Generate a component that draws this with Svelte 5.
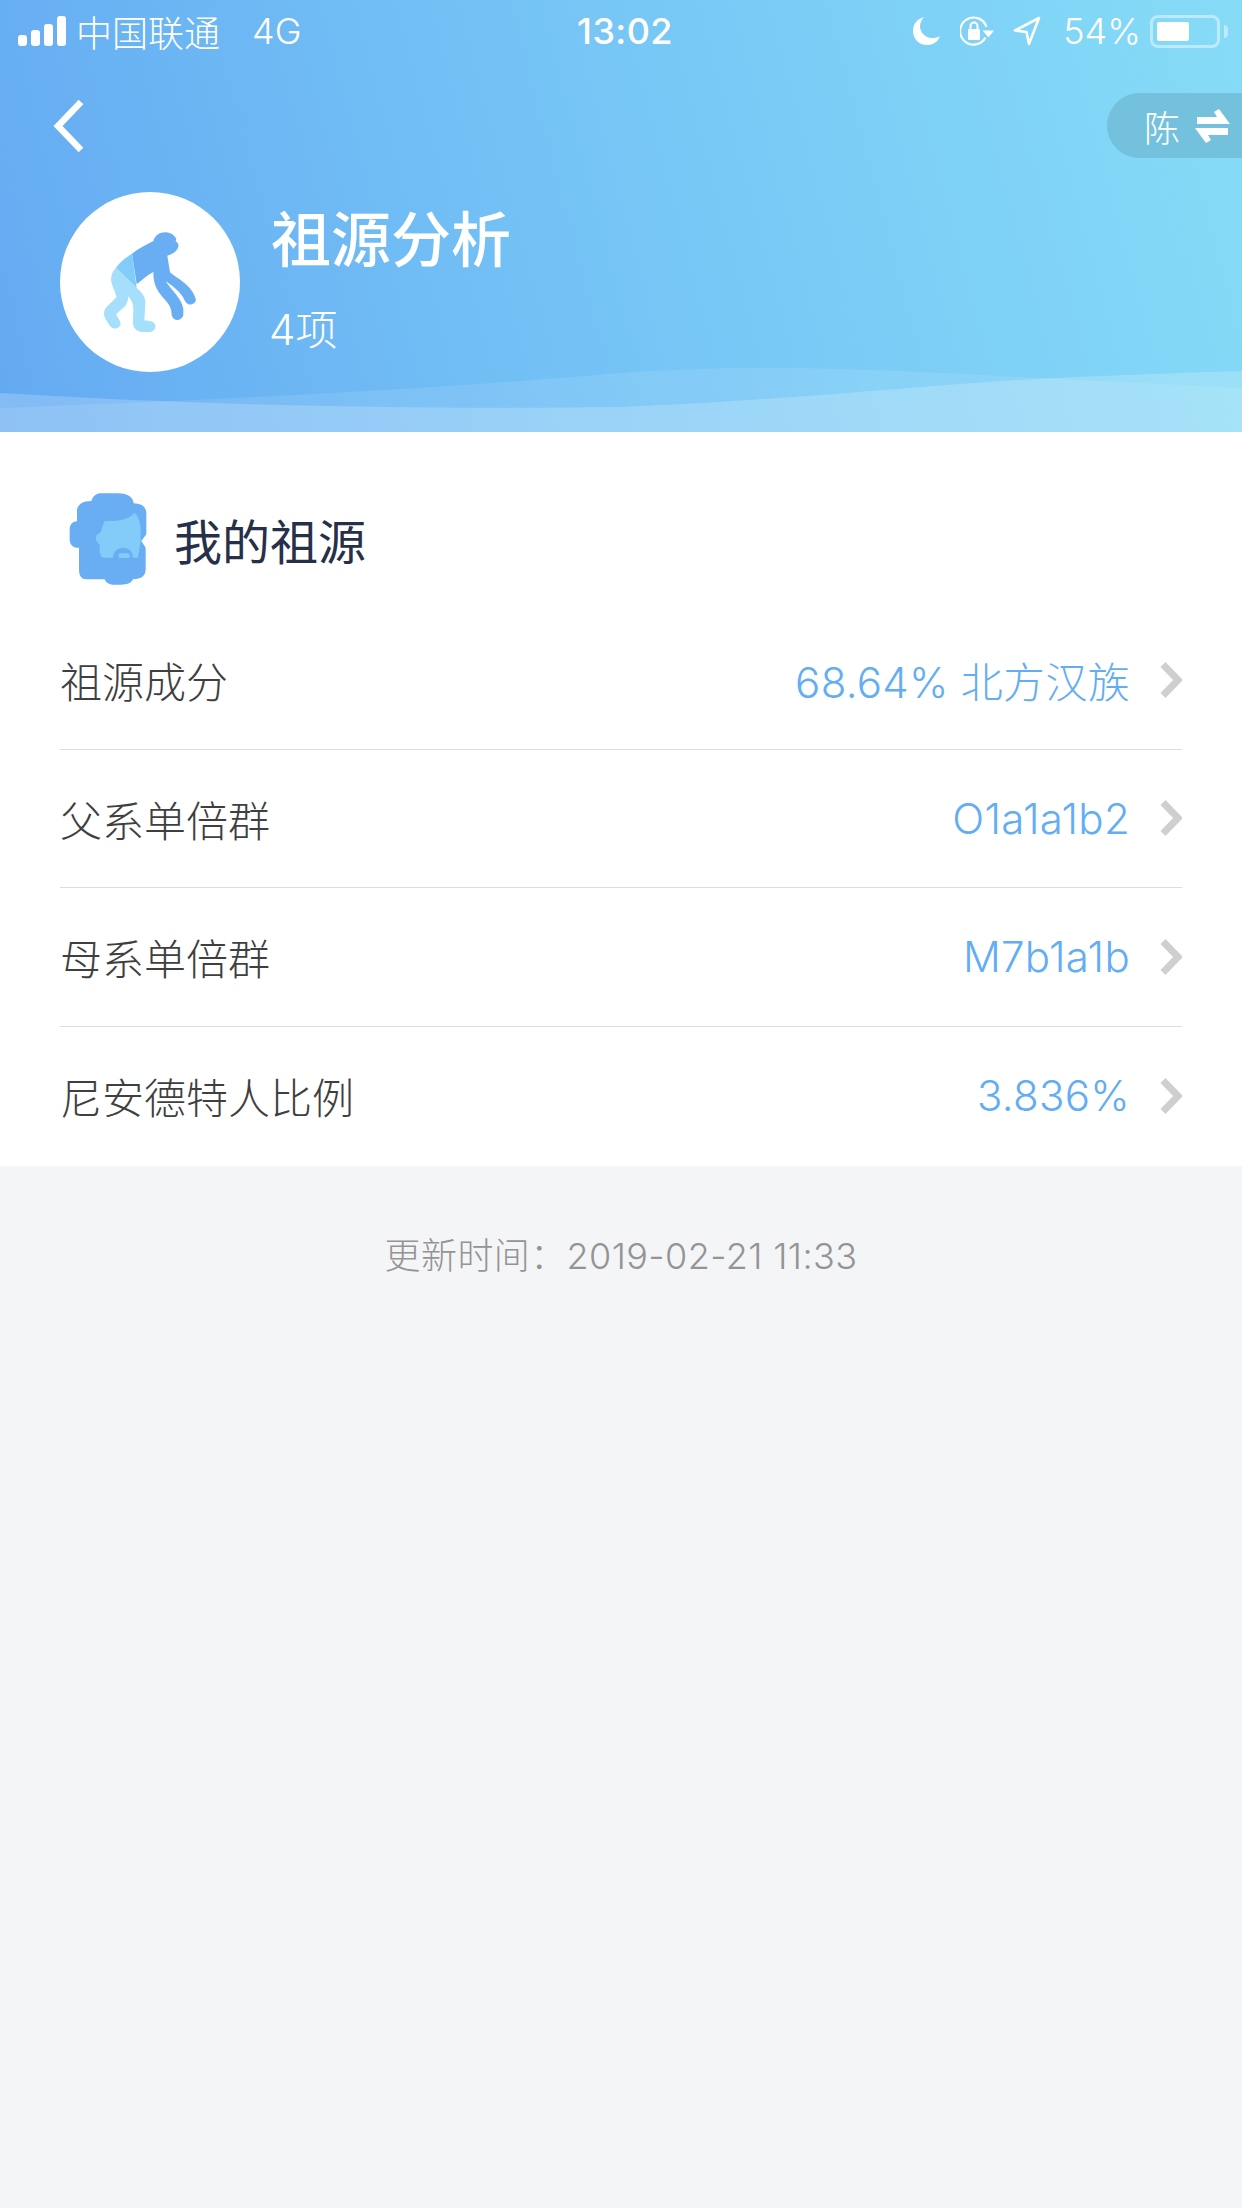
<script lang="ts">
	const rows = [
		{ label: '祖源成分', value: '68.64% 北方汉族' },
		{ label: '父系单倍群', value: 'O1a1a1b2' },
		{ label: '母系单倍群', value: 'M7b1a1b' },
		{ label: '尼安德特人比例', value: '3.836%' }
	]
	const bars = [11, 16, 22, 30]
</script>

<div class="page">
	<header class="hero">
		<div class="status">
			<div class="status-left">
				<div class="signal">
					{#each bars as h}
						<span style="height: {h}px"></span>
					{/each}
				</div>
				<span class="carrier">中国联通</span>
				<span class="net">4G</span>
			</div>
			<div class="time">13:02</div>
			<div class="status-right">
				<svg class="moon" viewBox="0 0 27 28"><path d="M11 0C4 2 0 7 0 14c0 8 6 14 14 14 6 0 11-3 13-9-2 1.500-5 2-8 2C12 21 7 15 7 9c0-3 2-7 4-9z" fill="#fff" /></svg>
				<svg class="rotate" viewBox="0 0 34 30">
					<path d="M25.500 21.500A13.500 13.500 0 1 1 26.500 11" fill="none" stroke="#fff" stroke-width="2.200" />
					<path d="M22.500 14.500h11.500l-5.500 7z" fill="#fff" />
					<rect x="8" y="13" width="12" height="11" rx="1" fill="#fff" />
					<path d="M10.500 14V10a3.500 3.500 0 0 1 7 0v4" fill="none" stroke="#fff" stroke-width="2" />
				</svg>
				<svg class="arrow" viewBox="0 0 28 30"><path d="M26 2 2 14.500l11.500 1.500 2.500 12z" fill="none" stroke="#fff" stroke-width="2.600" stroke-linejoin="round" /></svg>
				<span class="pct">54%</span>
				<div class="battery"><span class="level"></span></div>
				<span class="tip"></span>
			</div>
		</div>

		<div class="nav">
			<svg class="back" viewBox="0 0 32 54"><path d="M29 3 6 27l23 24" fill="none" stroke="#fff" stroke-width="6.500" /></svg>
			<div class="switch">
				<span>陈</span>
				<svg viewBox="0 0 35 34" width="35" height="34">
					<path d="M2 15V8h20l-3-5 5-3 11 15z" fill="#fff" />
					<path d="M33 19v7H13l3 5-5 3L0 19z" fill="#fff" />
				</svg>
			</div>
		</div>

		<div class="profile">
			<div class="avatar">
				<svg viewBox="60 35 540 540" width="180" height="180">
					<path fill="#a5dffc" d="M228 262C215 275 212 290 214 305c4 15 11 30 16 45l-30 30c-10 10-10 25-2 38l12 19c10 13 30 8 32-7-2-10-10-20-14-28l27-24c7-10 10-20 10-30 10 12 15 24 15 37l-1 45c1 15 16 25 31 25h20c22-3 22-30 0-33l-17-2 3-50c2-20-11-35-26-48z" />
					<path fill="#82ccfa" d="M276 220l14 102-62-60c12-17 32-32 48-42z" />
					<path fill="#69aef3" d="M276 220c19-15 44-28 64-38 5-17 20-27 38-26 14 1 26 9 31 20l-2 6 8 8c3 15-8 28-33 36l8 50c20 18 65 37 77 79 3 13-12 20-22 17-10-4-12-17-20-27-10-15-30-30-48-42 18 27 48 52 53 82v20c-5 18-30 20-35 0 0-20-5-30-20-47-20-23-35-38-35-83-20 10-35 25-50 37z" />
				</svg>
			</div>
			<div class="profile-text">
				<h1>祖源分析</h1>
				<p>4项</p>
			</div>
		</div>

		<svg class="waves" viewBox="0 362 1242 70" preserveAspectRatio="none">
			<path fill="#fff" fill-opacity="0.1" d="M0 408C200 400 400 392 620 373c100-7 200-7 380 3l242 12v44H0z" />
			<path fill="#fff" fill-opacity="0.2" d="M0 393c200 12 400 17 620 14 180-7 330-25 456-30 74-3 124-5 166-6v61H0z" />
		</svg>
	</header>

	<section class="card">
		<div class="card-title">
			<svg viewBox="55 38 240 282" width="80" height="94">
				<path fill="#69aef3" d="M155 42h50c27 0 45 10 47 30l12 1c18 2 26 14 26 32v60l-15 20 13 20v65c0 20-13 30-38 30-5 12-20 16-35 16h-25c-15 0-22-8-25-16h-55c-15 0-22-10-22-30v-65H78c-12-3-18-13-18-25v-30c0-15 10-24 22-24V92c2-17 18-27 43-27 5-15 15-23 30-23z" />
				<path fill="#82ccfa" d="M165 125c30 0 70 0 90-25 13 15 17 30 18 50v35l-8 50h-15c0-20-15-30-28-30-17 0-32 10-32 30h-25c-15 0-15-15-15-40-15-10-15-30 2-35z" />
				<rect x="207" y="222" width="33" height="14" rx="5" fill="#82ccfa" />
			</svg>
			<h2>我的祖源</h2>
		</div>

		{#each rows as row, i}
			<div class="row" class:last={i === rows.length - 1}>
				<span class="label">{row.label}</span>
				<span class="value">{row.value}</span>
				<svg class="chev" viewBox="0 0 22 36" width="22" height="36"><path d="M3 2.500 18 18 3 33.500" fill="none" stroke="#cfcfcf" stroke-width="7" /></svg>
			</div>
		{/each}
	</section>

	<p class="updated">更新时间：2019-02-21 11:33</p>
</div>

<style>
	:global(body) {
		margin: 0;
		background: #f4f5f7;
	}

	.page {
		min-height: 2208px;
		font-family: Inter, 'Noto Sans CJK SC', sans-serif;
		background: #f4f5f7;
	}

	.hero {
		position: relative;
		height: 432px;
		overflow: hidden;
		color: #fff;
		background: linear-gradient(75deg, #64aaf2 0%, #76c5f6 50%, #86dcf7 100%);
	}

	.status {
		display: grid;
		grid-template-columns: 1fr auto 1fr;
		align-items: center;
		height: 62px;
		font-size: 36px;
		font-weight: 300;
	}

	.status-left {
		display: flex;
		align-items: center;
		padding-left: 18px;
	}

	.signal {
		display: flex;
		align-items: flex-end;
		gap: 4px;
		height: 30px;
		margin-right: 10px;
	}

	.signal span {
		width: 9px;
		background: #fff;
		border-radius: 3px;
	}

	.net {
		margin-left: 32px;
	}

	.time {
		font-weight: 500;
		padding-left: 8px;
		letter-spacing: 0.400px;
	}

	.status-right {
		display: flex;
		align-items: center;
		justify-content: flex-end;
		padding-right: 14px;
	}

	.moon {
		width: 27px;
		height: 28px;
	}

	.rotate {
		width: 34px;
		height: 30px;
		margin-left: 20px;
	}

	.arrow {
		width: 28px;
		height: 30px;
		margin-left: 19px;
	}

	.pct {
		margin-left: 22px;
	}

	.battery {
		box-sizing: border-box;
		width: 70px;
		height: 33px;
		margin-left: 9px;
		padding: 4px;
		border: 3px solid rgba(255, 255, 255, 0.45);
		border-radius: 8px;
	}

	.level {
		display: block;
		width: 32px;
		height: 100%;
		background: #fff;
		border-radius: 2px;
	}

	.tip {
		width: 4px;
		height: 13px;
		margin-left: 4px;
		background: rgba(255, 255, 255, 0.45);
		border-radius: 0 4px 4px 0;
	}

	.nav {
		display: flex;
		align-items: center;
		justify-content: space-between;
		height: 65px;
		margin-top: 31px;
		padding-left: 52px;
	}

	.back {
		width: 32px;
		height: 54px;
	}

	.switch {
		display: flex;
		align-items: center;
		gap: 15px;
		box-sizing: border-box;
		width: 135px;
		height: 65px;
		padding-left: 37px;
		font-size: 36px;
		font-weight: 300;
		background: #74c1de;
		border-radius: 33px 0 0 33px;
	}

	.profile {
		display: flex;
		align-items: center;
		gap: 31px;
		margin-top: 34px;
		padding-left: 60px;
	}

	.avatar {
		display: flex;
		width: 180px;
		height: 180px;
		background: #fff;
		border-radius: 50%;
	}

	.profile-text {
		display: flex;
		flex-direction: column;
		gap: 26px;
		padding-bottom: 6px;
	}

	h1 {
		margin: 0;
		font-size: 60px;
		font-weight: 500;
		line-height: 76px;
	}

	.profile-text p {
		margin: 0 0 0 -2px;
		font-size: 42px;
		font-weight: 300;
		line-height: 52px;
	}

	.waves {
		position: absolute;
		left: 0;
		bottom: 0;
		width: 100%;
		height: 70px;
	}

	.card {
		box-sizing: border-box;
		height: 734px;
		padding: 60px 60px 0;
		background: #fff;
	}

	.card-title {
		display: flex;
		align-items: center;
		gap: 26px;
		height: 94px;
		margin-bottom: 25px;
		margin-left: 8px;
	}

	h2 {
		margin: 0;
		font-size: 48px;
		font-weight: 400;
		color: #263048;
	}

	.row {
		display: flex;
		align-items: center;
		box-sizing: border-box;
		height: 138.500px;
		border-bottom: 1.500px solid #dfddd6;
		font-size: 42px;
		font-weight: 300;
	}

	.row.last {
		border-bottom: none;
	}

	.label {
		flex: 1;
		color: #3f3f3f;
	}

	.value {
		color: #62adf3;
		letter-spacing: 0.300px;
	}

	.chev {
		margin-left: 30px;
	}

	.updated {
		margin: 0;
		padding-top: 65px;
		font-size: 36px;
		font-weight: 300;
		letter-spacing: 0.400px;
		line-height: 50px;
		color: #949494;
		text-align: center;
	}
</style>
